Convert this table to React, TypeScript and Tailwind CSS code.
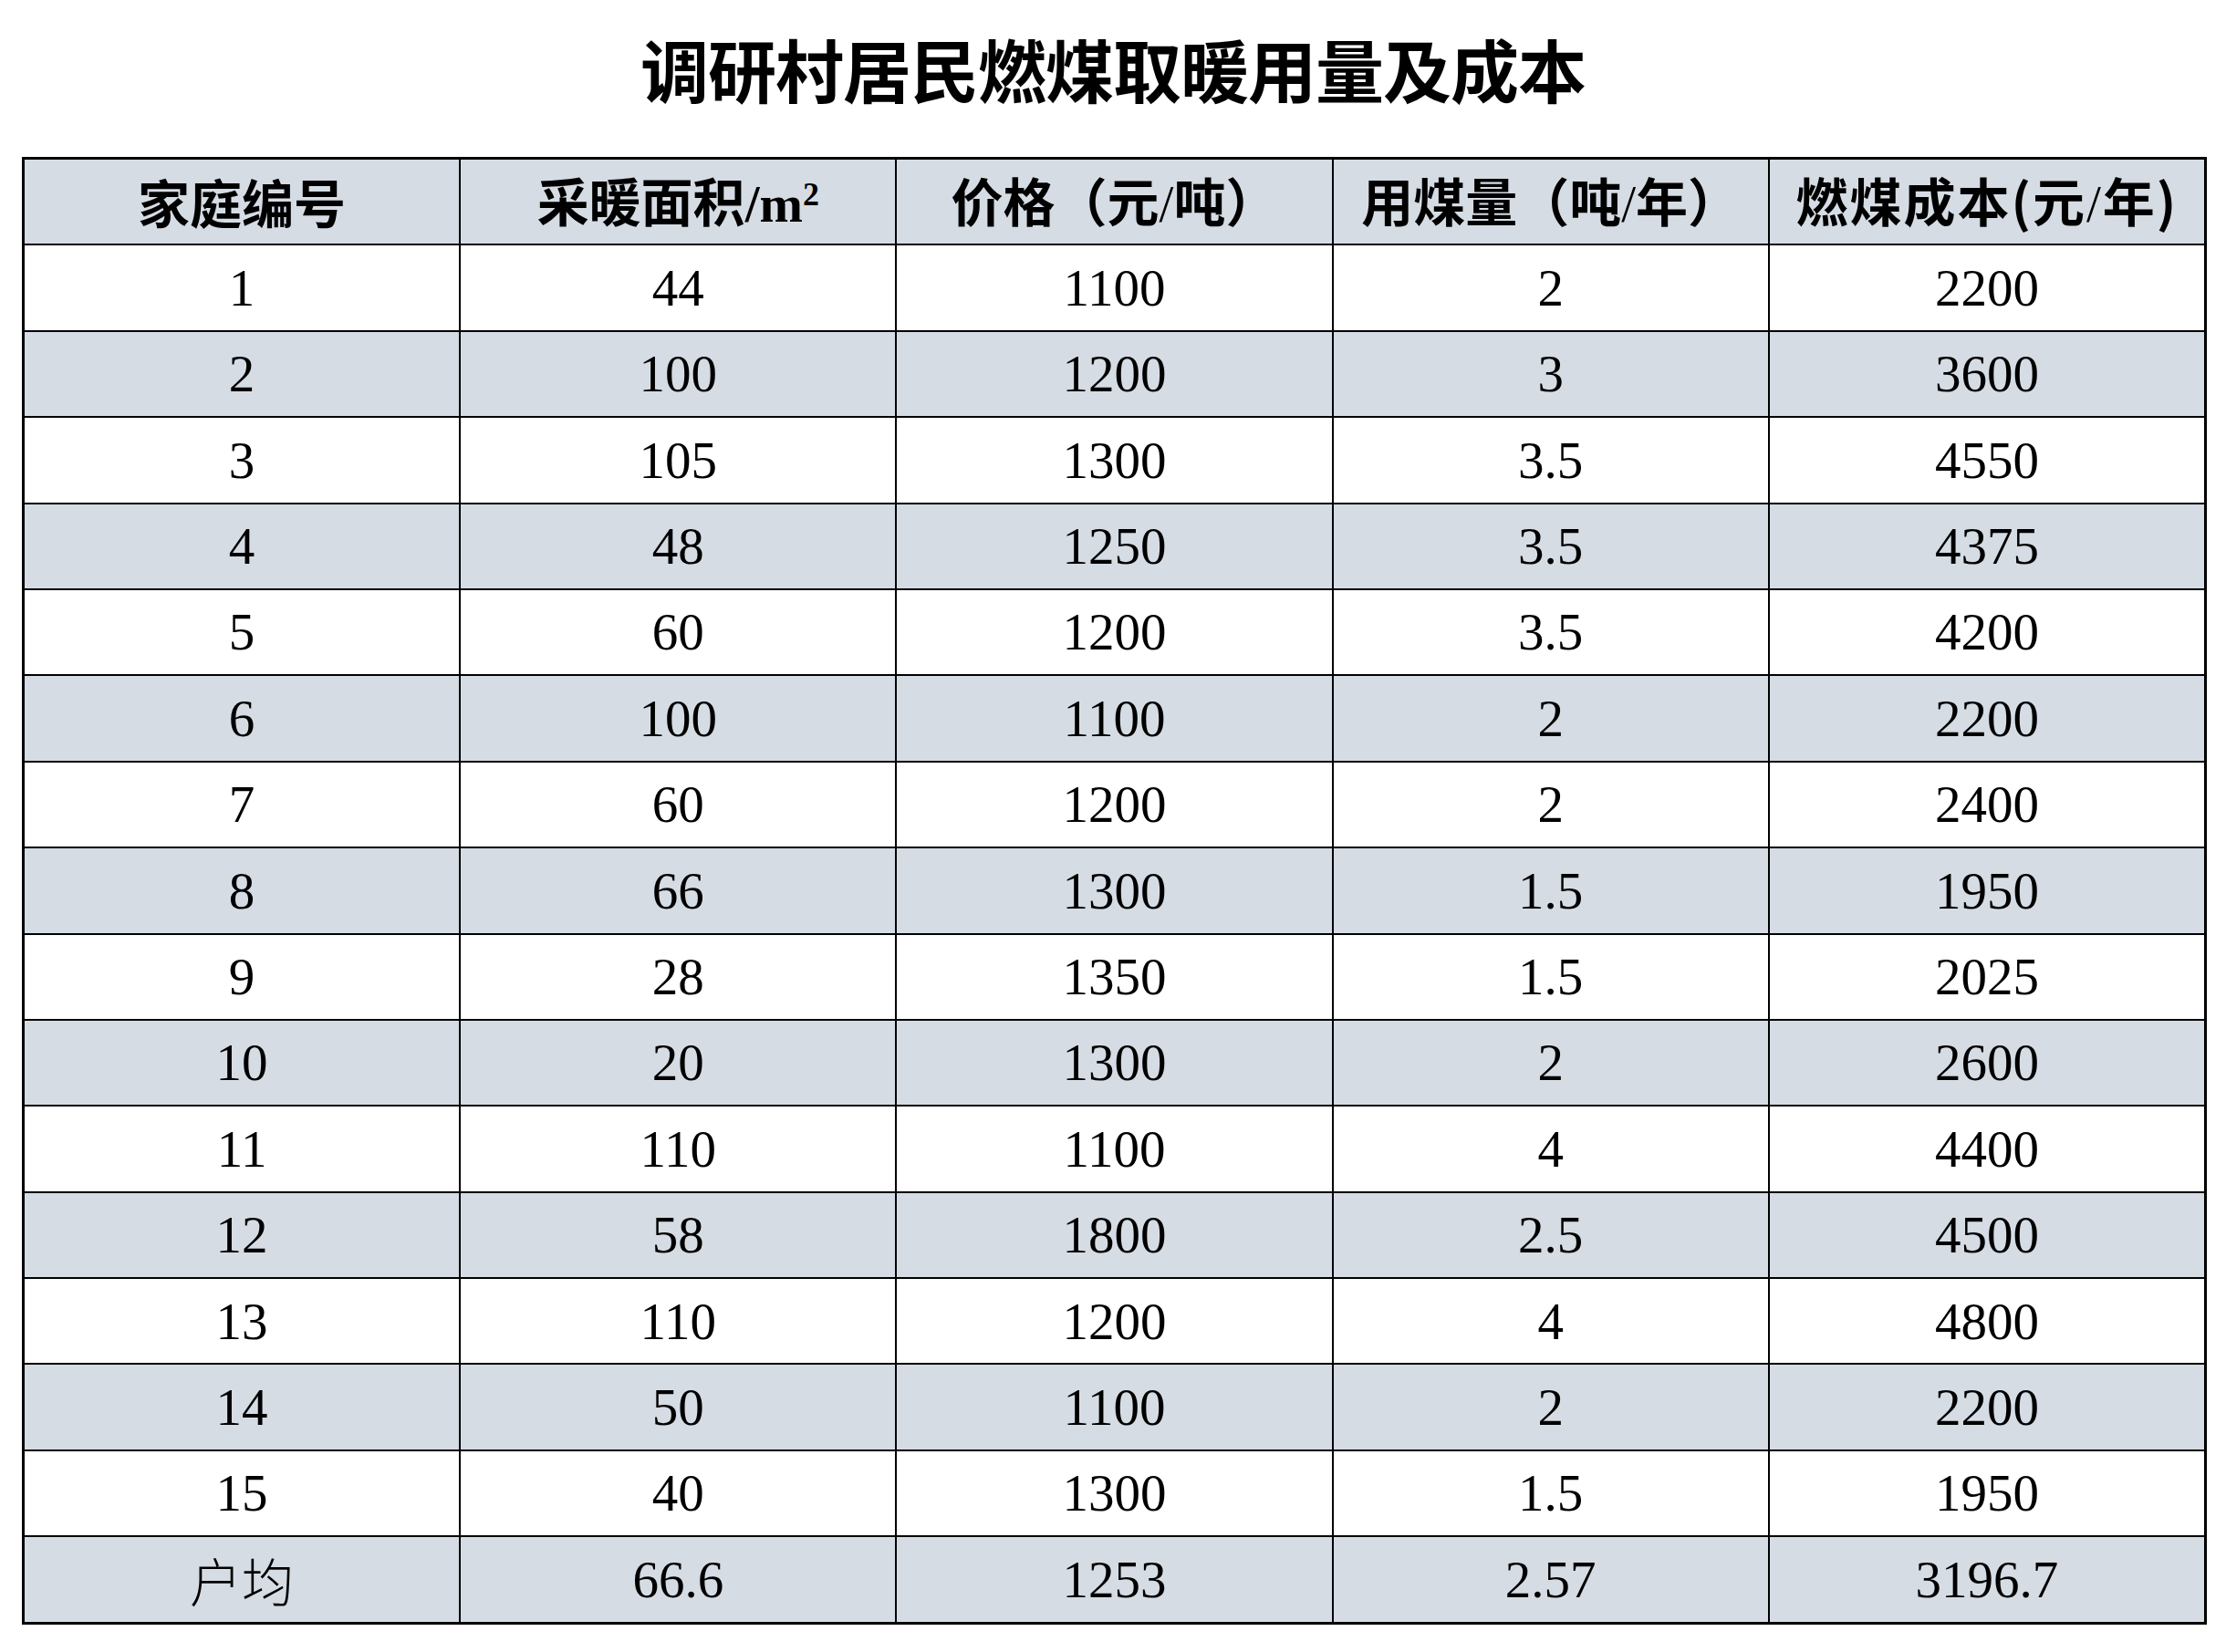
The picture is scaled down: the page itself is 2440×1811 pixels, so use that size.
import React from "react";

const rows: [string, string, string, string, string][] = [
  ["1", "44", "1100", "2", "2200"],
  ["2", "100", "1200", "3", "3600"],
  ["3", "105", "1300", "3.5", "4550"],
  ["4", "48", "1250", "3.5", "4375"],
  ["5", "60", "1200", "3.5", "4200"],
  ["6", "100", "1100", "2", "2200"],
  ["7", "60", "1200", "2", "2400"],
  ["8", "66", "1300", "1.5", "1950"],
  ["9", "28", "1350", "1.5", "2025"],
  ["10", "20", "1300", "2", "2600"],
  ["11", "110", "1100", "4", "4400"],
  ["12", "58", "1800", "2.5", "4500"],
  ["13", "110", "1200", "4", "4800"],
  ["14", "50", "1100", "2", "2200"],
  ["15", "40", "1300", "1.5", "1950"],
];

const cjk = "font-['Noto_Sans_CJK_SC',sans-serif]";
const serif = "font-['Liberation_Serif','Noto_Sans_CJK_SC',serif]";

function Cell({ shaded, children, className = "" }: { shaded: boolean; children: React.ReactNode; className?: string }) {
  return (
    <div
      className={`flex items-center justify-center text-black ${shaded ? "bg-[#d6dce4]" : "bg-white"} ${className}`}
    >
      {children}
    </div>
  );
}

export default function App() {
  return (
    <div className="w-[2440px] h-[1811px] bg-white">
      <div className={`h-[148px] flex items-center justify-center text-[75px] leading-none font-bold text-black tracking-[-1px] ${cjk}`}>
        调研村居民燃煤取暖用量及成本
      </div>
      <div className="mt-[24px] ml-[24px] w-[2395px] grid grid-cols-5 auto-rows-[92.4px] gap-[2px] p-[3px] bg-black">
        <Cell shaded className={`text-[57px] font-bold ${cjk}`}>家庭编号</Cell>
        <Cell shaded className={`text-[57px] font-bold ${cjk}`}>
          <span>
            采暖面积
            <span className={`${serif} font-bold`}>
              /m<sup className="text-[36px]">2</sup>
            </span>
          </span>
        </Cell>
        <Cell shaded className={`text-[57px] font-bold ${cjk}`}>
          <span>
            价格（元<span className={`${serif} font-normal`}>/</span>吨）
          </span>
        </Cell>
        <Cell shaded className={`text-[57px] font-bold ${cjk}`}>
          <span>
            用煤量（吨<span className={`${serif} font-normal`}>/</span>年）
          </span>
        </Cell>
        <Cell shaded className={`text-[57px] font-bold tracking-[2px] ${cjk}`}>
          <span>
            燃煤成本(元<span className={`${serif} font-normal`}>/</span>年)
          </span>
        </Cell>
        {rows.map((r, i) =>
          r.map((v, j) => (
            <Cell key={`${i}-${j}`} shaded={i % 2 === 1} className={`text-[57px] ${serif}`}>
              {v}
            </Cell>
          ))
        )}
        <Cell shaded className={`text-[57px] font-light ${cjk}`}>户均</Cell>
        <Cell shaded className={`text-[57px] ${serif}`}>66.6</Cell>
        <Cell shaded className={`text-[57px] ${serif}`}>1253</Cell>
        <Cell shaded className={`text-[57px] ${serif}`}>2.57</Cell>
        <Cell shaded className={`text-[57px] ${serif}`}>3196.7</Cell>
      </div>
    </div>
  );
}
